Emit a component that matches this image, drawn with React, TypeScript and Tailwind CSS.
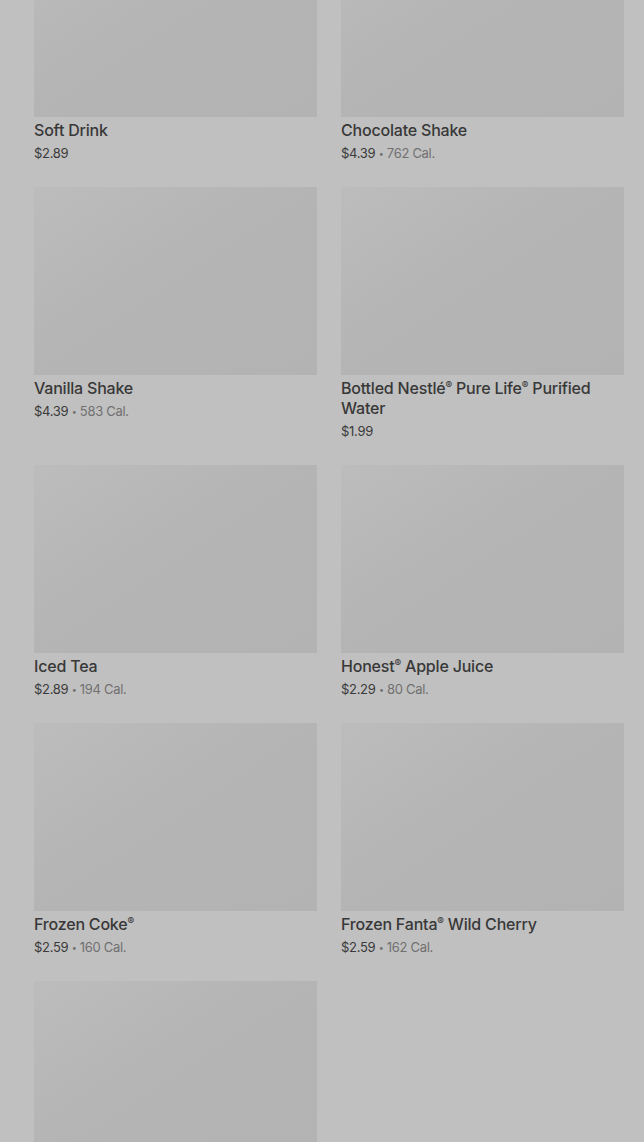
import React from "react";

type Item = { name: string; price: string; cal?: string };

const items: Item[] = [
  { name: "Soft Drink", price: "$2.89" },
  { name: "Chocolate Shake", price: "$4.39", cal: "762 Cal." },
  { name: "Vanilla Shake", price: "$4.39", cal: "583 Cal." },
  { name: "Bottled Nestlé® Pure Life® Purified Water", price: "$1.99" },
  { name: "Iced Tea", price: "$2.89", cal: "194 Cal." },
  { name: "Honest® Apple Juice", price: "$2.29", cal: "80 Cal." },
  { name: "Frozen Coke®", price: "$2.59", cal: "160 Cal." },
  { name: "Frozen Fanta® Wild Cherry", price: "$2.59", cal: "162 Cal." },
  { name: "", price: "" },
];

function Name({ text }: { text: string }) {
  const parts = text.split("®");
  return (
    <>
      {parts.map((p, i) => (
        <React.Fragment key={i}>
          {p}
          {i < parts.length - 1 && (
            <span className="relative -top-[5px] text-[10px] leading-[0]">®</span>
          )}
        </React.Fragment>
      ))}
    </>
  );
}

function Card({ item }: { item: Item }) {
  return (
    <div className="flex flex-col">
      <div className="h-[188px] w-full bg-gradient-to-br from-[#bcbcbc] via-[#b4b4b4] to-[#b3b3b3]" />
      {item.name && (
        <div className="pt-[3px]">
          <div className="h-auto text-[16px] leading-[20px] font-medium text-[#383838] tracking-[-0.2px]">
            <Name text={item.name} />
          </div>
          <div className="mt-[3px] h-[20px] text-[13px] leading-[20px] text-[#3a3a3a] tracking-[-0.3px]">
            {item.price}
            {item.cal && (
              <span className="text-[#707070]">
                {" "}
                <span className="relative -top-[1px] text-[9px] leading-[0]">•</span> {item.cal}
              </span>
            )}
          </div>
        </div>
      )}
    </div>
  );
}

export default function App() {
  return (
    <div
      className="h-[1142px] w-[644px] overflow-hidden bg-[#c0c0c0]"
      style={{ fontFamily: "Inter, 'Noto Sans', sans-serif" }}
    >
      <div className="-mt-[71px] grid grid-cols-2 gap-x-[24px] gap-y-[24px] pl-[34px] pr-[20px]">
        {items.map((it, i) => (
          <Card key={i} item={it} />
        ))}
      </div>
    </div>
  );
}
